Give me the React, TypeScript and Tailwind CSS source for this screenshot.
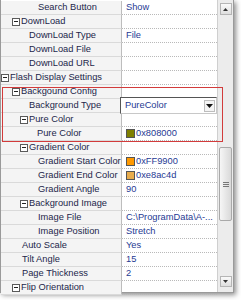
import React from "react";

type Row = {
  label: string;
  indent: number;
  group?: boolean;
  value?: string;
  color?: string;
  select?: boolean;
};

const rows: Row[] = [
  { label: "Search Button", indent: 37, value: "Show" },
  { label: "DownLoad", group: true, indent: 11 },
  { label: "DownLoad Type", indent: 28, value: "File" },
  { label: "DownLoad File", indent: 28 },
  { label: "DownLoad URL", indent: 28 },
  { label: "Flash Display Settings", group: true, indent: -3 },
  { label: "Backgound Config", group: true, indent: 11 },
  { label: "Background Type", indent: 28, value: "PureColor", select: true },
  { label: "Pure Color", group: true, indent: 19 },
  { label: "Pure Color", indent: 36, value: "0x808000", color: "#808000" },
  { label: "Gradient Color", group: true, indent: 19 },
  { label: "Gradient Start Color", indent: 37, value: "0xFF9900", color: "#FF9900" },
  { label: "Gradient End Color", indent: 37, value: "0xe8ac4d", color: "#e8ac4d" },
  { label: "Gradient Angle", indent: 37, value: "90" },
  { label: "Background Image", group: true, indent: 19 },
  { label: "Image File", indent: 37, value: "C:\\ProgramData\\A-..." },
  { label: "Image Position", indent: 37, value: "Stretch" },
  { label: "Auto Scale", indent: 21, value: "Yes" },
  { label: "Tilt Angle", indent: 21, value: "15" },
  { label: "Page Thickness", indent: 21, value: "2" },
  { label: "Flip Orientation", group: true, indent: 11 },
];

function Minus() {
  return (
    <span className="mr-[1px] flex h-[8px] w-[8px] shrink-0 items-center justify-center border border-[#5a5a5a] bg-white">
      <span className="h-px w-[4px] bg-[#222]" />
    </span>
  );
}

function ValueCell({ r }: { r: Row }) {
  if (r.select) {
    return (
      <div className="relative h-full flex-1 border-b border-dotted border-[#b9b9b9]">
        <div className="absolute -left-[2px] -top-[2px] flex h-[17px] w-[97px] items-center border border-t-[#555] border-l-[#555] border-r-[#c8c8c8] border-b-[#c8c8c8] bg-white pl-[4px] text-[#1f3a93]">
          <span className="flex-1">{r.value}</span>
          <span className="mr-px flex h-[12px] w-[11px] items-center justify-center border border-[#bdbdbd] bg-[#f4f4f4]">
            <svg width="7" height="4" viewBox="0 0 7 4">
              <path d="M0 0h7L3.5 4z" fill="#111" />
            </svg>
          </span>
        </div>
      </div>
    );
  }
  return (
    <div className="flex h-full flex-1 items-center overflow-hidden whitespace-nowrap border-b border-dotted border-[#b9b9b9] pl-[4px] text-[#1f3a93]">
      {r.color && (
        <span
          className="mr-[1px] h-[9px] w-[9px] shrink-0 border border-[#555]"
          style={{ backgroundColor: r.color }}
        />
      )}
      {r.value}
    </div>
  );
}

export default function App() {
  return (
    <div
      className="relative h-[300px] w-[241px] overflow-hidden bg-white"
      style={{ fontFamily: '"Liberation Sans", Arial, sans-serif' }}
    >
      <div className="flex h-[293px] w-[234px] border-b border-l border-r border-[#9a9a9a] bg-white text-[9.3px] leading-none shadow-[2px_2px_5px_rgba(0,0,0,0.45)]">
        <div className="flex w-[216px] flex-col pt-px">
          {rows.map((r, i) => (
            <div key={i} className="flex h-[14px] shrink-0">
              <div
                className="flex h-full w-[121px] shrink-0 items-center overflow-hidden whitespace-nowrap border-b border-r border-b-[#dadada] border-r-[#bdbdbd] bg-[#f4f4f4] text-[#23264a]"
                style={{ paddingLeft: r.indent }}
              >
                {r.group && <Minus />}
                {r.label}
              </div>
              <ValueCell r={r} />
            </div>
          ))}
        </div>
        <div className="flex w-[16px] flex-col items-center border-l border-[#cfcfcf] bg-[#ececec] pt-[3px]">
          <div className="flex h-[12px] w-[12px] items-center justify-center border border-[#b5b5b5] bg-gradient-to-b from-[#fafafa] to-[#dedede]">
            <svg width="5" height="3" viewBox="0 0 5 3">
              <path d="M0 3h5L2.5 0z" fill="#333" />
            </svg>
          </div>
          <div className="mt-[132px] flex h-[74px] w-[13px] items-center justify-center rounded-[2px] border border-[#a9a9a9] bg-gradient-to-r from-[#f6f6f6] to-[#d9d9d9]">
            <div className="flex flex-col gap-px">
              <span className="h-px w-[6px] bg-[#777]" />
              <span className="h-px w-[6px] bg-[#777]" />
              <span className="h-px w-[6px] bg-[#777]" />
            </div>
          </div>
          <div className="mt-auto mb-[5px] flex h-[11px] w-[12px] items-center justify-center border border-[#b5b5b5] bg-gradient-to-b from-[#fafafa] to-[#dedede]">
            <svg width="5" height="3" viewBox="0 0 5 3">
              <path d="M0 0h5L2.5 3z" fill="#333" />
            </svg>
          </div>
        </div>
      </div>
      <div className="pointer-events-none absolute left-[2px] top-[87px] h-[55px] w-[221px] border border-[#d23b3b]" />
    </div>
  );
}
